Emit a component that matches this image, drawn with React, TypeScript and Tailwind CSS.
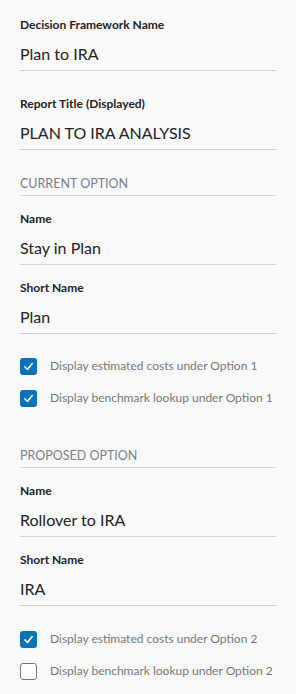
import React from "react";

const font = { fontFamily: 'Lato, "Open Sans", sans-serif' };

function Field({ label, value, top }: { label: string; value: string; top: string }) {
  return (
    <div className={top}>
      <div className="text-[12px] font-bold leading-[16px] text-[#222] whitespace-nowrap">{label}</div>
      <div className="mt-[11px] text-[16px] leading-[20px] text-[#222] pb-[6px] border-b border-[#cfcfcf] whitespace-nowrap">{value}</div>
    </div>
  );
}

function Check({ checked, label }: { checked: boolean; label: string }) {
  return (
    <div className="flex items-center h-[32px]">
      {checked ? (
        <div className="w-[17px] h-[17px] shrink-0 rounded-[3px] bg-[#0a72b5] flex items-center justify-center">
          <svg width="11" height="11" viewBox="0 0 12 12" fill="none">
            <path d="M2 6.5 L4.8 9.2 L10 2.8" stroke="white" strokeWidth="1.8" strokeLinecap="round" strokeLinejoin="round" />
          </svg>
        </div>
      ) : (
        <div className="w-[17px] h-[17px] shrink-0 rounded-[3px] border border-[#777] bg-white" />
      )}
      <span className="ml-[13px] text-[12px] text-[#777] whitespace-nowrap">{label}</span>
    </div>
  );
}

function Section({ title, top }: { title: string; top: string }) {
  return (
    <div className={`${top} text-[12.5px] leading-[16px] text-[#7a7f88] pb-[3px] border-b border-[#d6d6d6] whitespace-nowrap`}>{title}</div>
  );
}

export default function App() {
  return (
    <div className="w-[296px] h-[694px] bg-[#f9f9f9] px-[20px] pt-[17px] overflow-hidden" style={font}>
      <Field label="Decision Framework Name" value="Plan to IRA" top="" />
      <Field label="Report Title (Displayed)" value="PLAN TO IRA ANALYSIS" top="mt-[25px]" />
      <Section title="CURRENT OPTION" top="mt-[26px]" />
      <Field label="Name" value="Stay in Plan" top="mt-[15px]" />
      <Field label="Short Name" value="Plan" top="mt-[15px]" />
      <div className="mt-[16px]">
        <Check checked label="Display estimated costs under Option 1" />
        <Check checked label="Display benchmark lookup under Option 1" />
      </div>
      <Section title="PROPOSED OPTION" top="mt-[34px]" />
      <Field label="Name" value="Rollover to IRA" top="mt-[15px]" />
      <Field label="Short Name" value="IRA" top="mt-[15px]" />
      <div className="mt-[17px]">
        <Check checked label="Display estimated costs under Option 2" />
        <Check checked={false} label="Display benchmark lookup under Option 2" />
      </div>
    </div>
  );
}
